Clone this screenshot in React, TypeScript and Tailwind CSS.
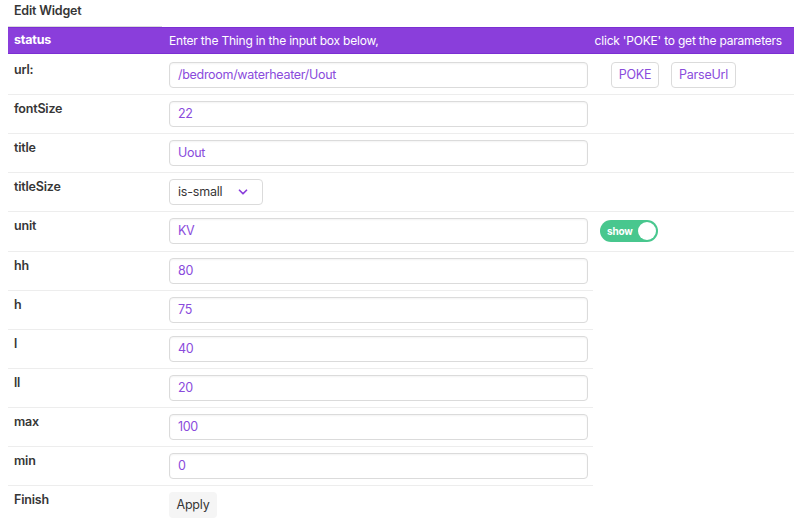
import { ChevronDown } from "lucide-react";

type Row = { label: string; value?: string; extra?: "poke" | "toggle" | "blank" };

const rows: Row[] = [
  { label: "url:", value: "/bedroom/waterheater/Uout", extra: "poke" },
  { label: "fontSize", value: "22", extra: "blank" },
  { label: "title", value: "Uout", extra: "blank" },
  { label: "titleSize", extra: "blank" },
  { label: "unit", value: "KV", extra: "toggle" },
  { label: "hh", value: "80" },
  { label: "h", value: "75" },
  { label: "l", value: "40" },
  { label: "ll", value: "20" },
  { label: "max", value: "100" },
  { label: "min", value: "0" },
];

function TextInput({ value }: { value: string }) {
  return (
    <div className="h-[26px] w-[419px] rounded-[4px] border border-[#dbdbdb] px-[8px] text-[12.5px] leading-[24px] tracking-[-0.3px] text-[#8a4bdc] shadow-[inset_0_1px_2px_rgba(10,10,10,0.05)]">
      {value}
    </div>
  );
}

export default function App() {
  return (
    <div className="min-h-[530px] bg-white font-['Inter',sans-serif] text-[12.5px] tracking-[-0.2px] text-[#363636]">
      {/* titre */}
      <div className="h-[26px] pl-[14px] pt-[2px] font-semibold leading-[18px]">Edit Widget</div>
      <div className="ml-2 h-px w-[154px] bg-[#dbdbdb]" />

      {/* en-tête violet */}
      <div className="ml-2 flex h-[27px] items-center whitespace-nowrap border-y border-[#7b2fd3] bg-[#8a3edb] text-[12px] text-white">
        <div className="w-[153px] pl-[6px] text-[12.5px] font-bold">status</div>
        <div className="w-[432px] pl-[8px]">Enter the Thing in the input box below,</div>
        <div className="flex-1 pr-[12px] text-right">click 'POKE' to get the parameters</div>
      </div>

      {rows.map((r, i) => (
        <div
          key={r.label}
          className={`ml-2 flex border-b border-[#ededed] ${r.extra ? "" : "w-[585px]"} ${i === 0 ? "pt-[8px] pb-[6px]" : "pt-[6px] pb-[6.15px]"}`}
        >
          <div className="w-[153px] pl-[6px] font-semibold leading-[16px]">{r.label}</div>
          <div className="w-[432px] pl-[8px]">
            {r.label === "titleSize" ? (
              <div className="flex h-[26px] w-[94px] items-center justify-between rounded-[4px] border border-[#dbdbdb] pl-[8px] pr-[12px]">
                <span>is-small</span>
                <ChevronDown className="h-[14px] w-[14px] text-[#8a3edb]" strokeWidth={3} />
              </div>
            ) : (
              <TextInput value={r.value ?? ""} />
            )}
          </div>
          {r.extra === "poke" && (
            <div className="flex flex-1 gap-[12px] pl-[18px]">
              <button className="h-[26px] w-[48px] rounded-[4px] border border-[#dbdbdb] text-[#8a4bdc]">POKE</button>
              <button className="h-[26px] w-[65px] rounded-[4px] border border-[#dbdbdb] text-[#8a4bdc]">ParseUrl</button>
            </div>
          )}
          {r.extra === "toggle" && (
            <div className="flex flex-1 items-center pl-[7px]">
              <div className="flex h-[22px] w-[58px] items-center justify-between rounded-full bg-[#48c78e] pl-[7px] pr-[2px]">
                <span className="text-[10px] font-bold text-white">show</span>
                <span className="h-[18px] w-[18px] rounded-full bg-white" />
              </div>
            </div>
          )}
          {r.extra === "blank" && <div className="flex-1" />}
        </div>
      ))}

      {/* dernière ligne */}
      <div className="ml-2 flex pt-[6px]">
        <div className="w-[153px] pl-[6px] font-semibold leading-[16px]">Finish</div>
        <div className="pl-[8px]">
          <button className="h-[26px] w-[48px] rounded-[4px] bg-[#f5f5f5] text-[#363636]">Apply</button>
        </div>
      </div>
    </div>
  );
}
